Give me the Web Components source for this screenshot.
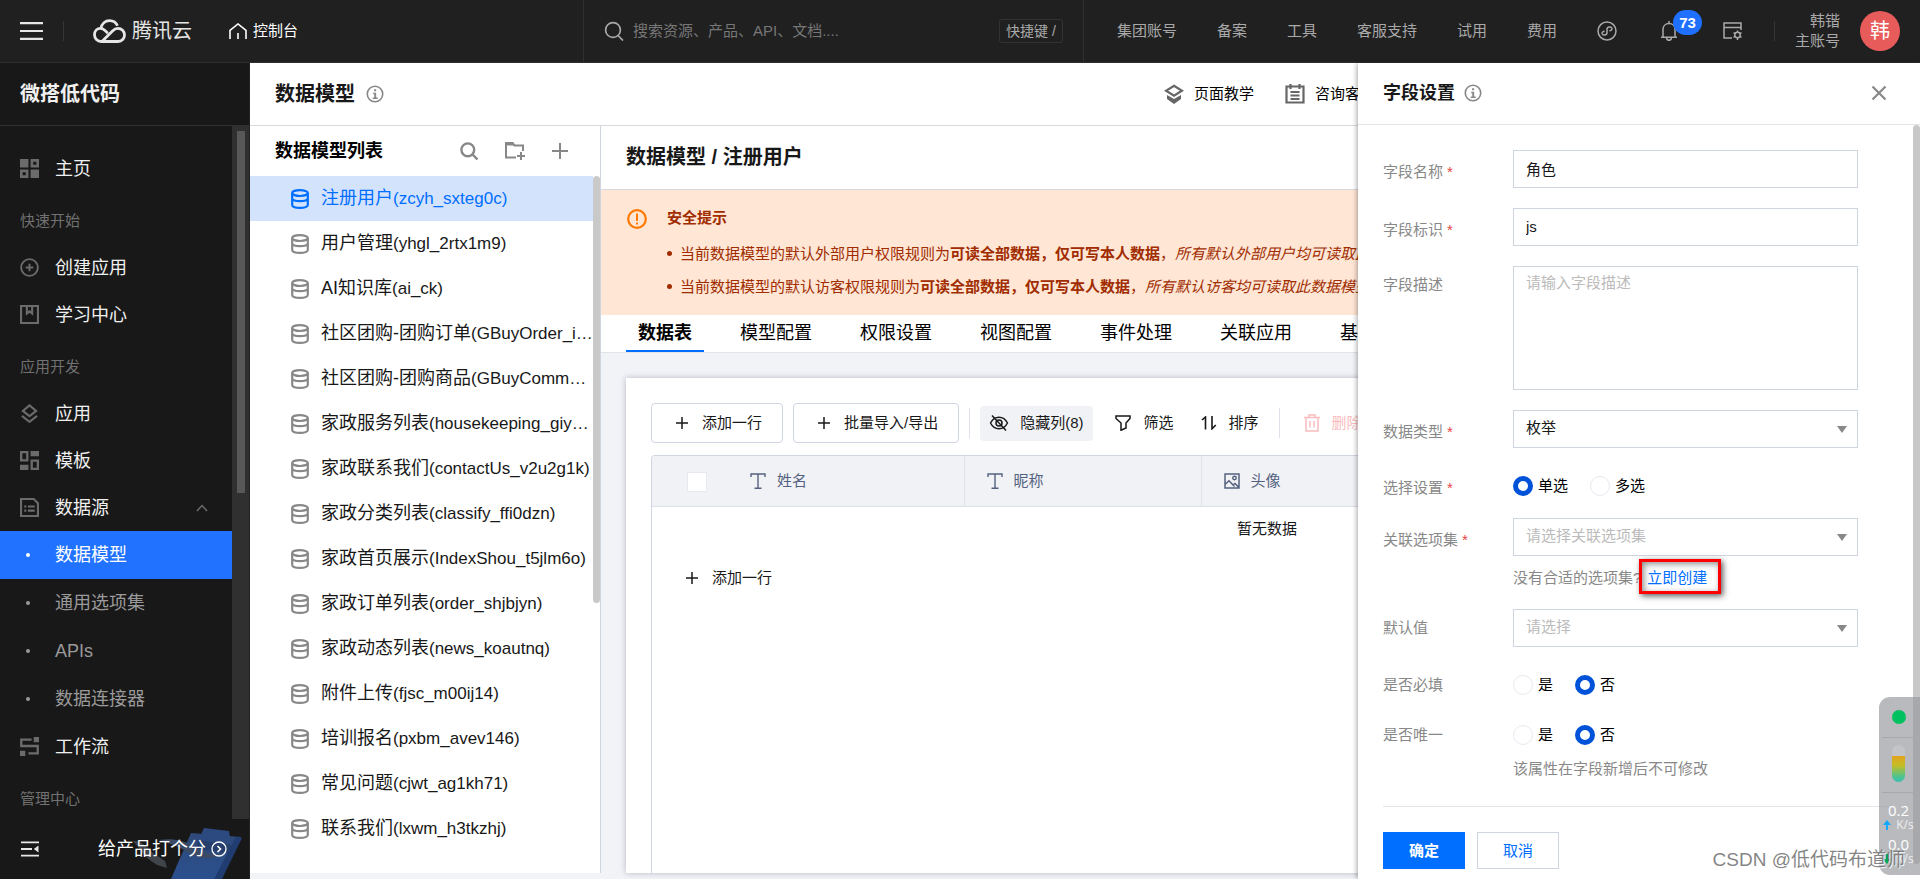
<!DOCTYPE html>
<html lang="zh-CN">
<head>
<meta charset="utf-8">
<title>数据模型 - 微搭低代码</title>
<style>
  html, body { margin: 0; height: 100%; overflow: hidden; }
  body { font-family: "Liberation Sans", "Noto Sans CJK SC", sans-serif; font-size: 15px; line-height: 20px; color: #181818; background: #f2f3f7; }
</style>
</head>
<body>
<console-app></console-app>

<script>
const ICONS = {
  menu: ['0 0 23 20', '<path d="M0 2.2h23M0 10h23M0 17.8h23" stroke="currentColor" stroke-width="2.2"/>'],
  cloud: ['0 0 33 24', '<g fill="none" stroke="currentColor" stroke-width="2.8"><path d="M8 9.3C8.8 4.6 12.2 1.6 16.5 1.6c3.7 0 6.7 2 8 5.2"/><path d="M14.8 14.2l-2.2-2.1C11 10.500 9.300 9.400 7.500 9.400 4 9.400 1.500 12.200 1.500 15.800c0 3.700 2.900 6.700 6.600 6.700h17c3.700 0 6.400-3 6.400-6.500 0-3.700-2.900-6.600-6.500-6.600-2.400 0-4 1-5.500 2.500L9.500 22"/></g>'],
  home: ['0 0 18 16', '<path d="M1 16V7.500L9 1l8 6.500V16M9 16v-6" fill="none" stroke="currentColor" stroke-width="1.600"/>'],
  searchThin: ['0 0 20 20', '<g fill="none" stroke="currentColor" stroke-width="1.700"><circle cx="9" cy="9" r="7.400"/><path d="M14 14.500l5 5"/></g>'],
  mini: ['0 0 20 20', '<g fill="none" stroke="currentColor" stroke-width="1.500"><circle cx="10" cy="10" r="9"/><path d="M7.600 10.200c-1.800.200-2.700 1.200-2.500 2.500.4 2 4.900 1.900 4.900-.9V8.200c0-2.800 4.500-2.900 4.900-.9.200 1.300-.7 2.300-2.500 2.500"/></g>'],
  bell: ['0 0 18 20', '<g fill="none" stroke="currentColor" stroke-width="1.500"><path d="M1 16.200h16M3 16V8.500C3 5 5.500 2.500 9 2.500S15 5 15 8.500V16M9 0v2.500"/><path d="M6.500 17c.3 1.500 1.200 2.200 2.500 2.200s2.200-.7 2.500-2.200"/></g>'],
  panel: ['0 0 20 18', '<g fill="none" stroke="currentColor" stroke-width="1.500"><path d="M9 16H1V1h17v7M1 5.500h17"/><circle cx="14.500" cy="13" r="2.700"/><path d="M14.500 8.500v2M14.500 15.500v2.500M10.500 10.700l1.700 1M16.800 14.300l1.700 1M10.500 15.300l1.700-1M16.800 11.700l1.700-1"/></g>'],
  grid: ['0 0 18 18', '<g fill="currentColor"><path d="M0 0h8v8H0zM10 10h8v8h-8z"/><path fill-rule="evenodd" d="M10 0h8v8h-8zM12.500 2.500v3h3v-3zM0 10h8v8H0zM2.500 12.500v3h3v-3z"/></g>'],
  plusCircle: ['0 0 20 20', '<g fill="none" stroke="currentColor" stroke-width="2"><circle cx="10" cy="10" r="8.800"/><path d="M10 6v8M6 10h8"/></g>'],
  book: ['0 0 18 18', '<path d="M1 1h16v16H1zM6.500 1v7L9 6l2.500 2V1" fill="none" stroke="currentColor" stroke-width="2"/>'],
  layers: ['0 0 18 20', '<path d="M9 1.500l7 5.800-7 5.500-7-5.500zM1 12.500l8 6.300 8-6.300" fill="none" stroke="currentColor" stroke-width="2.200"/>'],
  template: ['0 0 18 18', '<g fill="currentColor"><path fill-rule="evenodd" d="M0 0h8v10H0zM2.200 2.200v5.600h3.600V2.200zM10 8h8v10h-8zM12.200 10.200v5.600h3.600v-5.600z"/><path d="M10 0h8v5h-8zM0 13h8v5H0z"/></g>'],
  source: ['0 0 18 18', '<path d="M1 1h12l4 4v12H1z" fill="none" stroke="currentColor" stroke-width="2"/><path d="M4 7h2v2H4zM7.500 7H14v2H7.500zM4 11h2v2H4zM7.500 11H14v2H7.500z" fill="currentColor"/>'],
  flow: ['0 0 18 18', '<g fill="currentColor"><path d="M13 0h5v5h-5zM0 13h5v5H0z"/></g><path d="M11 2.500H1.200v6h15.600v7H8" fill="none" stroke="currentColor" stroke-width="2.200"/>'],
  up: ['0 0 12 8', '<path d="M1 7l5-5.500L11 7" fill="none" stroke="currentColor" stroke-width="1.500"/>'],
  collapse: ['0 0 18 16', '<path d="M0 1.300h18M0 8h11M0 14.700h18" stroke="currentColor" stroke-width="1.800"/><path d="M17.500 4.500v7L12.800 8z" fill="currentColor"/>'],
  go: ['0 0 16 16', '<g fill="none" stroke="currentColor" stroke-width="1.300"><circle cx="8" cy="8" r="7"/><path d="M6.500 5l3 3-3 3" stroke-width="1.600"/></g>'],
  info: ['0 0 20 20', '<circle cx="10" cy="10" r="8.600" fill="none" stroke="currentColor" stroke-width="1.800"/><path d="M9 4.800h2.300v2.200H9zM8 8.700h3.300V14H13v1.500H7.500V14h1.700v-3.800H8z" fill="currentColor"/>'],
  search: ['0 0 18 18', '<g fill="none" stroke="currentColor" stroke-width="2.400"><circle cx="7.800" cy="7.800" r="6.400"/><path d="M12.500 12.500l5 5"/></g>'],
  folderAdd: ['0 0 20 18', '<path d="M11 15.500H1V1h6.500l2 2.500H18V9" fill="none" stroke="currentColor" stroke-width="2"/><path d="M0 0h8l2.500 3.500H0z" fill="currentColor"/><path d="M16 10v8M12 14h8" stroke="currentColor" stroke-width="2"/>'],
  plus: ['0 0 16 16', '<path d="M8 0v16M0 8h16" stroke="currentColor" stroke-width="2"/>'],
  db: ['0 0 18 20', '<g fill="none" stroke="currentColor" stroke-width="2.200"><ellipse cx="9" cy="4.100" rx="7.800" ry="2.900"/><path d="M1.200 4.100v11.600c0 2 3 3.200 7.800 3.200s7.800-1.200 7.800-3.200V4.100M1.200 9.300c0 2 3 2.900 7.800 2.900s7.800-.9 7.800-2.900"/></g>'],
  teach: ['0 0 20 20', '<path d="M10 1.800l8 5-8 5-8-5z" fill="none" stroke="currentColor" stroke-width="2.200"/><path d="M3 11l7 4 7-4v4l-7 5-7-5z" fill="currentColor"/>'],
  note: ['0 0 20 20', '<path d="M1.500 2.500h17v16h-17zM5.500 0v5M14.500 0v5M5.500 8h9M5.500 11.500h9M5.500 15h9" fill="none" stroke="currentColor" stroke-width="2.200"/>'],
  warn: ['0 0 20 20', '<circle cx="10" cy="10" r="8.800" fill="none" stroke="currentColor" stroke-width="2.200"/><path d="M9 4.500h2V12H9zM9 13.500h2v2H9z" fill="currentColor"/>'],
  hide: ['0 0 20 18', '<g fill="none" stroke="currentColor" stroke-width="1.500"><path d="M1.500 9C3.500 5.200 6.500 3.200 10 3.200s6.500 2 8.500 5.800c-2 3.800-5 5.800-8.500 5.800S3.500 12.800 1.500 9z"/><circle cx="10" cy="9" r="3"/><path d="M3 1.500l14 15"/></g>'],
  filter: ['0 0 16 16', '<path d="M1 1h14v2.500l-4 4.500v5l-5 2.300V8L1 3.500z" fill="none" stroke="currentColor" stroke-width="1.500"/>'],
  sort: ['0 0 16 14', '<path d="M1 4l3.500-3v12.500M11 0v12.800L14.800 9" fill="none" stroke="currentColor" stroke-width="1.600"/>'],
  trash: ['0 0 16 18', '<path d="M0 3.500h16M5 3V1h6v2M2 3.500v13.500h12V3.500M6 7v6.500M10 7v6.500" fill="none" stroke="currentColor" stroke-width="1.500"/>'],
  text: ['0 0 16 16', '<path d="M1 4V1h14v3M8 1v14M4.500 15.200h7" fill="none" stroke="currentColor" stroke-width="1.400"/>'],
  image: ['0 0 16 16', '<g fill="none" stroke="currentColor" stroke-width="1.500"><path d="M1 1h14v14H1zM1 11.500l4-3.700 5.500 5.700M9 12l2-1.500L14.500 14"/><circle cx="10.500" cy="5" r="1.700"/></g>'],
  close: ['0 0 16 16', '<path d="M1.500 1.500l13 13M14.500 1.500l-13 13" stroke="currentColor" stroke-width="2.200"/>'],
  caret: ['0 0 10 7', '<path d="M0 0h10L5 7z" fill="currentColor"/>'],
  arrowUp: ['0 0 8 10', '<path d="M4 0l4 5H5v5H3V5H0z" fill="currentColor"/>'],
  arrowDown: ['0 0 8 10', '<path d="M4 10l4-5H5V0H3v5H0z" fill="currentColor"/>']
};

function define(name, html, setup) {
  const tpl = document.createElement('template');
  tpl.innerHTML = typeof html === 'string' ? html : '';
  customElements.define(name, class extends HTMLElement {
    constructor() {
      super();
      const root = this.attachShadow({ mode: 'open' });
      if (typeof html === 'function') root.innerHTML = html(this);
      else root.append(tpl.content.cloneNode(true));
      if (setup) setup(this, root);
    }
  });
}

const icon = (name, w, h = w) => `<ui-icon name="${name}" style="width:${w}px;height:${h}px"></ui-icon>`;

customElements.define('ui-icon', class extends HTMLElement {
  connectedCallback() {
    if (this.shadowRoot) return;
    const [box, body] = ICONS[this.getAttribute('name')];
    this.attachShadow({ mode: 'open' }).innerHTML =
      `<style>:host{display:block;flex:none}svg{display:block;width:100%;height:100%}</style>
       <svg viewBox="${box}" fill="none" aria-hidden="true">${body}</svg>`;
  }
});

/* ---------- top bar ---------- */
define('top-bar', `
<style>
  :host { display: flex; align-items: stretch; height: 62px; background: #202020; border-bottom: 1px solid #2e2e2e; color: #a9a9a9; white-space: nowrap; }
  a { color: inherit; text-decoration: none; }
  button { all: unset; cursor: pointer; }
  .left { flex: none; box-sizing: border-box; width: 583px; display: flex; align-items: center; padding-left: 20px; color: #e6e6e6; }
  .rule { width: 1px; height: 20px; background: #363636; }
  .left .rule { margin: 0 29px 0 20px; }
  .brand { display: flex; align-items: center; gap: 6px; font-size: 20px; }
  .home { display: flex; align-items: center; gap: 6px; margin-left: 37px; color: #fff; }
  .search { flex: 1; display: flex; align-items: center; gap: 9px; padding: 0 20px; border: solid #303030; border-width: 0 1px; }
  input { all: unset; flex: 1; min-width: 0; font: inherit; color: #ddd; }
  input::placeholder { color: #777; opacity: 1; }
  kbd { font: inherit; font-size: 14px; line-height: 22px; padding: 0 6px; border: 1px solid #333; border-radius: 3px; }
  nav { flex: none; display: flex; align-items: center; gap: 40px; padding: 0 20px 0 33px; }
  .tools { display: flex; align-items: center; }
  .bell { position: relative; margin: 0 45px 0 43px; }
  .badge { position: absolute; left: 13px; top: -11px; box-sizing: border-box; width: 29px; height: 25px; border-radius: 13px; background: #1f70ff; color: #fff; font-weight: bold; font-size: 15px; line-height: 25px; text-align: center; }
  .user { display: flex; align-items: center; gap: 20px; text-align: right; }
  .tools .rule { margin: 0 20px 0 31px; }
  .avatar { width: 40px; height: 40px; border-radius: 20px; background: #e85b5b; color: #fff; font-size: 20px; line-height: 40px; text-align: center; }
</style>
<div class="left">
  <button aria-label="菜单">${icon('menu', 23, 20)}</button><span class="rule"></span>
  <a class="brand" href="#">${icon('cloud', 33, 24)}腾讯云</a>
  <a class="home" href="#">${icon('home', 18, 16)}控制台</a>
</div>
<div class="search">${icon('searchThin', 20)}<input aria-label="搜索" placeholder="搜索资源、产品、API、文档...."><kbd>快捷键 /</kbd></div>
<nav>
  <a href="#">集团账号</a><a href="#">备案</a><a href="#">工具</a><a href="#">客服支持</a><a href="#">试用</a><a href="#">费用</a>
  <div class="tools">${icon('mini', 20)}
    <div class="bell">${icon('bell', 18, 20)}<span class="badge">73</span></div>
    ${icon('panel', 20, 18)}<span class="rule"></span>
    <div class="user"><div>韩锴<br>主账号</div><div class="avatar">韩</div></div>
  </div>
</nav>`);

/* ---------- left navigation ---------- */
define('side-item', el => `
<style>
  :host { display: block; color: #f0f0f0; font-size: 18px; }
  a { display: flex; align-items: center; gap: 16px; box-sizing: border-box; height: 47px; padding: 0 24px 0 20px; color: inherit; text-decoration: none; }
  a > span { flex: 1; }
  ui-icon { color: #6b6b6b; }
  .slot { display: flex; width: 19px; }
  :host([sub]) { color: #9a9a9a; }
  :host([sub]) a { height: 48px; }
  :host([sub]) .slot { box-sizing: border-box; padding-left: 6px; }
  i { width: 4px; height: 4px; border-radius: 2px; background: currentColor; }
  :host([active]) { background: #2173ff; color: #fff; }
</style>
<a href="#"><div class="slot">${el.hasAttribute('sub') ? '<i></i>' : icon(el.getAttribute('icon'), 19)}</div><span><slot></slot></span>${el.hasAttribute('open') ? icon('up', 12, 8) : ''}</a>`);

define('side-nav', `
<style>
  :host { display: flex; flex-direction: column; box-sizing: border-box; background: #181818; min-height: 0; border-right: 1px solid #222; }
  h1 { margin: 0; flex: none; height: 62px; padding-left: 20px; font-size: 20px; line-height: 62px; color: #f0f0f0; border-bottom: 1px solid #303030; }
  .scroll { flex: 1; min-height: 0; display: flex; overflow: hidden; }
  nav { flex: 1; padding-top: 19px; }
  h2 { margin: 0; padding: 6px 0 0 20px; height: 46px; font-weight: normal; font-size: 15px; line-height: 46px; color: #717171; }
  .track { width: 17px; background: #303030; padding-top: 5px; }
  .thumb { width: 8px; height: 362px; margin-left: 5px; background: #585858; }
  footer { position: relative; flex: none; height: 60px; display: flex; align-items: center; padding: 0 22px 0 21px; color: #fff; font-size: 18px; overflow: hidden; }
  footer button { all: unset; color: #e6e6e6; }
  footer a { position: relative; display: flex; align-items: center; gap: 5px; margin: 0 0 0 auto; color: #fff; text-decoration: none; }
  .art { position: absolute; right: 0; bottom: 0; }
</style>
<h1>微搭低代码</h1>
<div class="scroll">
  <nav>
    <side-item icon="grid">主页</side-item>
    <h2>快速开始</h2>
    <side-item icon="plusCircle">创建应用</side-item>
    <side-item icon="book">学习中心</side-item>
    <h2>应用开发</h2>
    <side-item icon="layers">应用</side-item>
    <side-item icon="template">模板</side-item>
    <side-item icon="source" open>数据源</side-item>
    <side-item sub active>数据模型</side-item>
    <side-item sub>通用选项集</side-item>
    <side-item sub>APIs</side-item>
    <side-item sub>数据连接器</side-item>
    <side-item icon="flow">工作流</side-item>
    <h2>管理中心</h2>
  </nav>
  <div class="track"><div class="thumb"></div></div>
</div>
<footer>
  <svg class="art" width="125" height="60" viewBox="125 0 125 60" aria-hidden="true">
    <defs><linearGradient id="b" x1="0" y1="0" x2="0" y2="1"><stop offset="0" stop-color="#2e4878"/><stop offset="1" stop-color="#2b508f"/></linearGradient></defs>
    <path d="M134 22c8-1 14 6 20 12l12 8 2 7-10-3c-8-5-14-10-18-17z" fill="#40444b"/>
    <path d="M192 14l50 4-25 42h-45z" fill="url(#b)"/>
    <path d="M237 18l6 1-20 41h-8z" fill="#203c70"/>
    <path d="M205 9l25 3 2 14-33-4z" fill="#2d4a80"/><path d="M199 21l34 5-4 8-32-4z" fill="#263f6c"/>
    <path d="M160 21c12-2 25 0 34 6 12 8 22 10 32 6-10 8-25 8-36 1-9-6-18-9-30-13z" fill="#3b4a66"/>
  </svg>
  <button aria-label="收起">${icon('collapse', 18, 16)}</button>
  <a href="#">给产品打个分${icon('go', 16)}</a>
</footer>`);

/* ---------- model list ---------- */
define('model-item', `
<style>
  :host { display: block; font-size: 18px; color: #181818; }
  a { display: flex; align-items: center; gap: 12px; height: 45px; padding-left: 41px; color: inherit; text-decoration: none; }
  span { flex: 1; min-width: 0; overflow: hidden; text-overflow: ellipsis; white-space: nowrap; line-height: 28px; }
  ::slotted(small) { font-size: 17px; }
  ui-icon { color: #888; }
  :host([active]) { background: #d4e3fc; color: #006eff; }
  :host([active]) ui-icon { color: #006eff; }
</style>
<a href="#">${icon('db', 18, 20)}<span><slot></slot></span></a>`);

const MODELS = [['注册用户', 'zcyh_sxteg0c)'], ['用户管理', 'yhgl_2rtx1m9)'], ['AI知识库', 'ai_ck)'], ['社区团购-团购订单', 'GBuyOrder_i…'], ['社区团购-团购商品', 'GBuyComm…'], ['家政服务列表', 'housekeeping_giy…'], ['家政联系我们', 'contactUs_v2u2g1k)'], ['家政分类列表', 'classify_ffi0dzn)'], ['家政首页展示', 'IndexShou_t5jlm6o)'], ['家政订单列表', 'order_shjbjyn)'], ['家政动态列表', 'news_koautnq)'], ['附件上传', 'fjsc_m00ij14)'], ['培训报名', 'pxbm_avev146)'], ['常见问题', 'cjwt_ag1kh71)'], ['联系我们', 'lxwm_h3tkzhj)']];

define('model-list', `
<style>
  :host { display: flex; flex-direction: column; background: #fff; border-right: 1px solid #cfd5de; min-height: 0; overflow: hidden; }
  header { flex: none; display: flex; align-items: center; height: 50px; padding: 0 32px 0 25px; color: #888; }
  h2 { flex: 1; margin: 0; font-size: 18px; line-height: 24px; color: #000; }
  button { all: unset; margin-left: 27px; }
  .body { display: flex; }
  .rows { flex: 1; min-width: 0; }
  .thumb { width: 7px; height: 427px; border-radius: 4px; background: #c9c9c9; }
</style>
<header><h2>数据模型列表</h2><button aria-label="搜索">${icon('search', 18)}</button><button aria-label="新建分组">${icon('folderAdd', 20, 18)}</button><button aria-label="新建">${icon('plus', 16)}</button></header>
<div class="body"><div class="rows">${MODELS.map(([title, id], i) => `<model-item${i ? '' : ' active'}>${title}<small>(${id}</small></model-item>`).join('')}</div><div class="thumb"></div></div>`);

/* ---------- model detail ---------- */
define('security-tip', `
<style>
  :host { display: flex; gap: 20px; padding: 17px 0 12px 26px; background: #ffe6d5; color: #a02c00; overflow: hidden; white-space: nowrap; }
  ui-icon { color: #ff7800; margin-top: 2px; }
  h3 { margin: 0 0 8px; font-size: 15px; line-height: 22px; }
  ul { margin: 0; padding: 0; list-style: none; }
  li { display: flex; align-items: center; line-height: 33px; }
  li::before { content: ""; width: 5px; height: 5px; border-radius: 3px; background: currentColor; margin-right: 8px; }
</style>
${icon('warn', 20)}
<div><h3>安全提示</h3><ul>
  <li><span>当前数据模型的默认外部用户权限规则为<b>可读全部数据，仅可写本人数据</b>，<em>所有默认外部用户均可读取此</em></span></li>
  <li><span>当前数据模型的默认访客权限规则为<b>可读全部数据，仅可写本人数据</b>，<em>所有默认访客均可读取此数据模型</em></span></li>
</ul></div>`);

define('tab-bar', `
<style>
  :host { display: flex; gap: 24px; height: 37px; padding-left: 25px; background: #fff; border-bottom: 1px solid #dfe3ea; overflow: hidden; }
  a { flex: none; padding: 0 12px; height: 37px; font-size: 18px; line-height: 36px; color: #000; text-decoration: none; }
  a.on { font-weight: bold; height: 35px; border-bottom: 2px solid #006eff; }
</style>
<a class="on" href="#">数据表</a><a href="#">模型配置</a><a href="#">权限设置</a><a href="#">视图配置</a><a href="#">事件处理</a><a href="#">关联应用</a><a href="#">基础信息</a>`);

define('data-card', `
<style>
  :host { display: flex; flex-direction: column; background: #fff; padding: 25px 25px 0; box-shadow: 0 0 6px rgba(40,50,70,.3); overflow: hidden; }
  .bar { display: flex; align-items: center; height: 40px; margin-bottom: 12px; white-space: nowrap; }
  button { all: unset; box-sizing: border-box; display: flex; align-items: center; flex: none; height: 35px; font-size: 15px; color: #181818; }
  .box { height: 40px; padding: 0 20px 0 24px; gap: 14px; border: 1px solid #cfd5e3; border-radius: 4px; margin-right: 10px; }
  .rule { flex: none; width: 1px; height: 30px; background: #dfe2ea; }
  .hide { margin: 0 22px 0 10px; padding: 0 9px; gap: 11px; background: #f1f2f6; border-radius: 4px; }
  .flat { gap: 13px; margin-right: 27px; }
  .sort { margin-right: 20px; gap: 12px; }
  .del { margin-left: 24px; color: #f8bcbe; gap: 12px; }
  .frame { flex: 1; border: 1px solid #cfd5e3; border-bottom: 0; border-radius: 4px 4px 0 0; overflow: hidden; }
  table { width: 100%; table-layout: fixed; border-collapse: collapse; }
  th { height: 50px; padding: 0 0 0 22px; text-align: left; font-weight: normal; color: #54627f; background: #f1f2f6; border-bottom: 1px solid #dce0e8; }
  th + th + th { border-left: 1px solid #dfe2ea; }
  th.check { padding-left: 35px; }
  th.first { padding-left: 12px; }
  th div { display: flex; align-items: center; gap: 11px; }
  input { display: block; appearance: none; margin: 2px 0 0; width: 20px; height: 20px; background: #fff; border: 1px solid #e6e9ef; }
  td { height: 43px; padding: 0; text-align: center; }
  .add { height: 56px; padding-left: 34px; gap: 14px; }
</style>
<div class="bar">
  <button class="box">${icon('plus', 12)}添加一行</button><button class="box">${icon('plus', 12)}批量导入/导出</button><span class="rule"></span>
  <button class="hide">${icon('hide', 20, 18)}隐藏列(8)</button>
  <button class="flat">${icon('filter', 16)}筛选</button>
  <button class="flat sort">${icon('sort', 16, 14)}排序</button><span class="rule"></span>
  <button class="del" disabled>${icon('trash', 16, 18)}删除</button>
</div>
<div class="frame">
  <table>
    <colgroup><col style="width:86px"><col style="width:226px"><col style="width:237px"><col></colgroup>
    <thead><tr>
      <th class="check"><input type="checkbox" aria-label="全选"></th>
      <th class="first"><div>${icon('text', 16)}姓名</div></th>
      <th><div>${icon('text', 16)}昵称</div></th>
      <th><div>${icon('image', 16)}头像</div></th>
    </tr></thead>
    <tbody><tr><td colspan="4">暂无数据</td></tr></tbody>
  </table>
  <button class="add">${icon('plus', 12)}添加一行</button>
</div>`);

define('model-detail', `
<style>
  :host { display: flex; flex-direction: column; min-width: 0; min-height: 0; background: #f2f3f7; }
  h2 { flex: none; margin: 0; height: 63px; padding-left: 25px; background: #fff; font-size: 20px; line-height: 63px; border-bottom: 1px solid #d8dadd; }
  data-card { flex: 1; margin: 25px 12px 0 25px; }
</style>
<h2>数据模型 / 注册用户</h2>
<security-tip></security-tip>
<tab-bar></tab-bar>
<data-card></data-card>`);

define('page-head', `
<style>
  :host { display: flex; align-items: center; height: 62px; padding-left: 25px; background: #fff; border-bottom: 1px solid #d8dadd; white-space: nowrap; }
  h1 { margin: 0; font-size: 20px; line-height: 28px; }
  h1 + ui-icon { margin-left: 11px; color: #888; }
  nav { display: flex; gap: 31px; margin-left: auto; width: 756px; }
  a { display: flex; align-items: center; gap: 10px; color: #000; text-decoration: none; }
  a ui-icon { color: #666; }
</style>
<h1>数据模型</h1>${icon('info', 18)}
<nav><a href="#">${icon('teach', 20)}页面教学</a><a href="#">${icon('note', 20)}咨询客服</a></nav>`);

/* ---------- field drawer ---------- */
define('form-row', el => `
<style>
  :host { display: grid; grid-template-columns: 130px 345px; align-items: start; color: #181818; }
  .label { color: #888; line-height: 20px; padding-top: 9px; }
  :host([required]) .label { padding-top: 12px; }
  :host([choice]) .label { padding-top: 8px; }
  :host([choice][required]) .label { padding-top: 10px; }
  :host([choice]) .field { padding-top: 8px; height: 22px; }
  .label b { color: #e54545; font-weight: normal; padding-left: 4px; }
  .hint ::slotted(*) { display: flex; margin-top: 10px; line-height: 23px; color: #888; white-space: nowrap; }
</style>
<div class="label"><slot name="label"></slot>${el.hasAttribute('required') ? '<b>*</b>' : ''}</div>
<div><div class="field"><slot></slot></div><div class="hint"><slot name="hint"></slot></div></div>`);

define('field-drawer', `
<style>
  :host { display: flex; flex-direction: column; background: #fff; box-shadow: -1px 0 5px rgba(0,0,0,.35); }
  header { flex: none; display: flex; align-items: center; height: 59px; padding: 0 33px 2px 25px; border-bottom: 1px solid #e3e5ea; color: #888; }
  h2 { margin: 0 9px 0 0; font-size: 18px; line-height: 26px; color: #181818; }
  button { all: unset; cursor: pointer; }
  .x { margin-left: auto; }
  .body { flex: 1; min-height: 0; display: flex; }
  .main { flex: 1; padding: 25px 0 0 25px; }
  .thumb { flex: none; width: 7px; height: 739px; border-radius: 4px; background: #c8c8c8; }
  form { display: flex; flex-direction: column; gap: 20px; }
  input[type=text], textarea, select { display: block; box-sizing: border-box; width: 100%; height: 38px; margin: 0; padding: 0 12px 2px; appearance: none; border: 1px solid #cfd5de; border-radius: 0; background: #fff; font: inherit; color: #181818; outline: 0; }
  textarea { height: 124px; padding: 6px 12px; resize: none; }
  ::placeholder { color: #bbb; opacity: 1; }
  select.empty { color: #bbb; }
  .pick { position: relative; }
  .pick ui-icon { position: absolute; right: 11px; top: 16px; color: #888; }
  .set { display: flex; gap: 22px; color: #000; }
  .set label { display: flex; align-items: center; gap: 5px; line-height: 20px; }
  input[type=radio] { appearance: none; box-sizing: border-box; margin: 0; width: 20px; height: 20px; border: 1px solid #e8eaf0; border-radius: 50%; background: #fff; }
  input[type=radio]:checked { border: 5px solid #0052d9; }
  .hint a { position: relative; margin-left: 6px; color: #006eff; text-decoration: none; }
  .mark { position: absolute; left: -8px; top: -7px; box-sizing: border-box; width: 82px; height: 35px; border: 3px solid #f00; box-shadow: 2px 2px 6px rgba(0,0,0,.65), inset 2px 2px 6px rgba(0,0,0,.45); }
  footer { margin: 26px 25px 0 0; padding-top: 25px; border-top: 1px solid #e3e5ea; display: flex; gap: 12px; }
  footer button { box-sizing: border-box; width: 82px; height: 37px; border: 1px solid #cfd5de; line-height: 35px; text-align: center; color: #006eff; }
  footer .ok { background: #006eff; border-color: #006eff; color: #fff; font-weight: bold; }
</style>
<header><h2>字段设置</h2>${icon('info', 18)}<button class="x" aria-label="关闭">${icon('close', 16)}</button></header>
<div class="body">
  <div class="main">
    <form>
      <form-row required><label slot="label" for="name">字段名称</label><input type="text" id="name" value="角色"></form-row>
      <form-row required><label slot="label" for="key">字段标识</label><input type="text" id="key" value="js"></form-row>
      <form-row><label slot="label" for="desc">字段描述</label><textarea id="desc" placeholder="请输入字段描述"></textarea></form-row>
      <form-row required><label slot="label" for="type">数据类型</label><div class="pick"><select id="type"><option>枚举</option></select>${icon('caret', 10, 7)}</div></form-row>
      <form-row choice required><span slot="label">选择设置</span><div class="set"><label><input type="radio" name="mode" checked>单选</label><label><input type="radio" name="mode">多选</label></div></form-row>
      <form-row required><label slot="label" for="opts">关联选项集</label><div class="pick"><select id="opts" class="empty"><option>请选择关联选项集</option></select>${icon('caret', 10, 7)}</div>
        <div slot="hint" class="hint">没有合适的选项集?<a href="#">立即创建<span class="mark"></span></a></div></form-row>
      <form-row><label slot="label" for="def">默认值</label><div class="pick"><select id="def" class="empty"><option>请选择</option></select>${icon('caret', 10, 7)}</div></form-row>
      <form-row choice><span slot="label">是否必填</span><div class="set"><label><input type="radio" name="req">是</label><label><input type="radio" name="req" checked>否</label></div></form-row>
      <form-row choice><span slot="label">是否唯一</span><div class="set"><label><input type="radio" name="uniq">是</label><label><input type="radio" name="uniq" checked>否</label></div>
        <div slot="hint">该属性在字段新增后不可修改</div></form-row>
    </form>
    <footer><button class="ok">确定</button><button>取消</button></footer>
  </div>
  <div class="thumb"></div>
</div>`);

/* ---------- network speed widget ---------- */
define('speed-widget', `
<style>
  :host { display: flex; flex-direction: column; align-items: center; box-sizing: border-box; width: 41px; height: 178px; padding: 13px 2px 0 0; border-radius: 11px 0 0 11px; background: rgba(150,153,158,.68); color: #fff; font: 15px/18px "Open Sans", sans-serif; }
  .dot { width: 14px; height: 14px; border-radius: 7px; background: #00c060; }
  hr { width: 33px; height: 1px; margin: 13px 0 7px; border: 0; background: #a6a9ad; }
  .pill { width: 13px; height: 37px; border-radius: 7px; background: linear-gradient(#c3c4c8 0 30%, #e3a21f 30%, #c4bd25 55%, #4fc48c 85%, #38bfb5); }
  .pill + hr { margin: 10px 0 8px; }
  .unit { display: flex; align-items: center; gap: 5px; font-size: 12px; line-height: 12px; margin-bottom: 4px; color: #eee; }
  .up { color: #14a9ff; } .down { color: #00a650; }
</style>
<div class="dot"></div><hr><div class="pill"></div><hr>
<div>0.2</div><div class="unit"><ui-icon class="up" name="arrowUp" style="width:8px;height:10px"></ui-icon>K/s</div>
<div>0.0</div><div class="unit"><ui-icon class="down" name="arrowDown" style="width:8px;height:10px"></ui-icon>K/s</div>`);

define('console-app', `
<style>
  :host { position: relative; display: grid; grid-template-rows: auto 1fr; height: 100vh; overflow: hidden; }
  .work { position: relative; display: grid; grid-template-columns: 250px 1fr; min-height: 0; }
  main { display: grid; grid-template: auto 1fr / 351px 1fr; min-width: 0; min-height: 0; padding-bottom: 6px; }
  page-head { grid-column: 1 / 3; }
  field-drawer { position: absolute; top: 0; right: 0; bottom: 0; width: 562px; }
  speed-widget { position: absolute; right: 0; bottom: 4px; }
  .watermark { position: absolute; right: 15px; bottom: 6px; font-size: 19px; line-height: 26px; color: rgba(110,110,110,.85); text-shadow: 1px 1px 1px #fff; white-space: nowrap; }
</style>
<top-bar></top-bar>
<div class="work">
  <side-nav></side-nav>
  <main><page-head></page-head><model-list></model-list><model-detail></model-detail></main>
  <field-drawer></field-drawer>
</div>
<speed-widget></speed-widget>
<div class="watermark">CSDN @低代码布道师</div>`);
</script>
</body>
</html>
